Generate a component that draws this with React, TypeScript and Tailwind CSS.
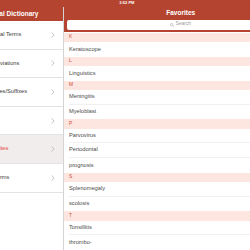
import React from "react";

const sections: { letter: string; items: string[] }[] = [
  { letter: "K", items: ["Keratoscope"] },
  { letter: "L", items: ["Linguistics"] },
  { letter: "M", items: ["Meningitis", "Myeloblast"] },
  { letter: "P", items: ["Parvovirus", "Periodontal", "prognosis"] },
  { letter: "S", items: ["Splenomegaly", "scolosis"] },
  { letter: "T", items: ["Tonsillitis", "thrombo-"] },
];

const menu = [
  { label: "Medical Terms", active: false },
  { label: "Abbreviations", active: false },
  { label: "Prefixes/Suffixes", active: false },
  { label: "Notes", active: false },
  { label: "Favorites", active: true },
  { label: "My Terms", active: false },
];

function Chevron() {
  return (
    <svg width="4" height="6" viewBox="0 0 8 13" className="shrink-0">
      <path d="M1.5 1.5 L6.5 6.5 L1.5 11.5" fill="none" stroke="#b8b8bd" strokeWidth="1.8" strokeLinecap="round" strokeLinejoin="round" />
    </svg>
  );
}

export default function App() {
  return (
    <div className="w-[250px] h-[250px] overflow-hidden bg-white font-['Liberation_Sans',Arial,sans-serif]">
      <div className="w-[341px] ml-[-43.67px] flex flex-col h-full">
        <div className="h-[6.67px] bg-[#b4442f] flex items-center justify-center text-white text-[4px] font-bold leading-none">
          3:52 PM
        </div>
        <div className="flex flex-1 min-h-0">
          {/* Master pane */}
          <div className="w-[106.67px] shrink-0 flex flex-col bg-white">
            <div className="h-[14.33px] bg-[#b4442f] flex items-center justify-center text-white text-[6.5px] font-bold leading-none whitespace-nowrap">
              Medical Dictionary
            </div>
            {menu.map((m) => (
              <div
                key={m.label}
                className={`h-[28.6px] flex items-center pl-[28.5px] pr-[8px] border-b border-[#e3e3e3] ${m.active ? "bg-[#f0edec]" : "bg-white"}`}
              >
                <span className={`flex-1 text-[5.7px] leading-none whitespace-nowrap ${m.active ? "text-[#e4453a]" : "text-[#3a3a3a]"}`}>
                  {m.label}
                </span>
                <Chevron />
              </div>
            ))}
          </div>
          <div className="w-px shrink-0 bg-[#d4d4d4]" />
          {/* Detail pane */}
          <div className="flex-1 flex flex-col">
            <div className="h-[14.67px] bg-[#b4442f] flex items-center justify-center text-white text-[6.5px] font-bold leading-none">
              Favorites
            </div>
            <div className="h-[14.67px] bg-[#b4442f] flex items-center px-[2.67px] pb-[1px]">
              <div className="flex-1 h-[9.33px] bg-white rounded-[2px] flex items-center justify-center gap-[1.5px] text-[#9a9a9a] text-[4.8px] leading-none">
                <svg width="4" height="4" viewBox="0 0 10 10">
                  <circle cx="4" cy="4" r="3" fill="none" stroke="#9a9a9a" strokeWidth="1.2" />
                  <path d="M6.2 6.2 L9 9" stroke="#9a9a9a" strokeWidth="1.2" strokeLinecap="round" />
                </svg>
                <span>Search</span>
              </div>
            </div>
            <div className="h-[1.33px] bg-white" />
            {sections.map((s) => (
              <div key={s.letter} className="flex flex-col">
                <div className="h-[9.33px] bg-[#fde5e0] flex items-center pl-[5px] text-[#cf4a3a] text-[4.8px] leading-none">
                  {s.letter}
                </div>
                {s.items.map((it, i) => (
                  <div key={it} className="h-[14.67px] pl-[5px] flex">
                    <div
                      className={`flex-1 flex items-center text-[5.7px] leading-none text-[#4a4a4a] ${i < s.items.length - 1 ? "border-b border-[#f0f0f0]" : ""}`}
                    >
                      {it}
                    </div>
                  </div>
                ))}
              </div>
            ))}
          </div>
        </div>
      </div>
    </div>
  );
}
